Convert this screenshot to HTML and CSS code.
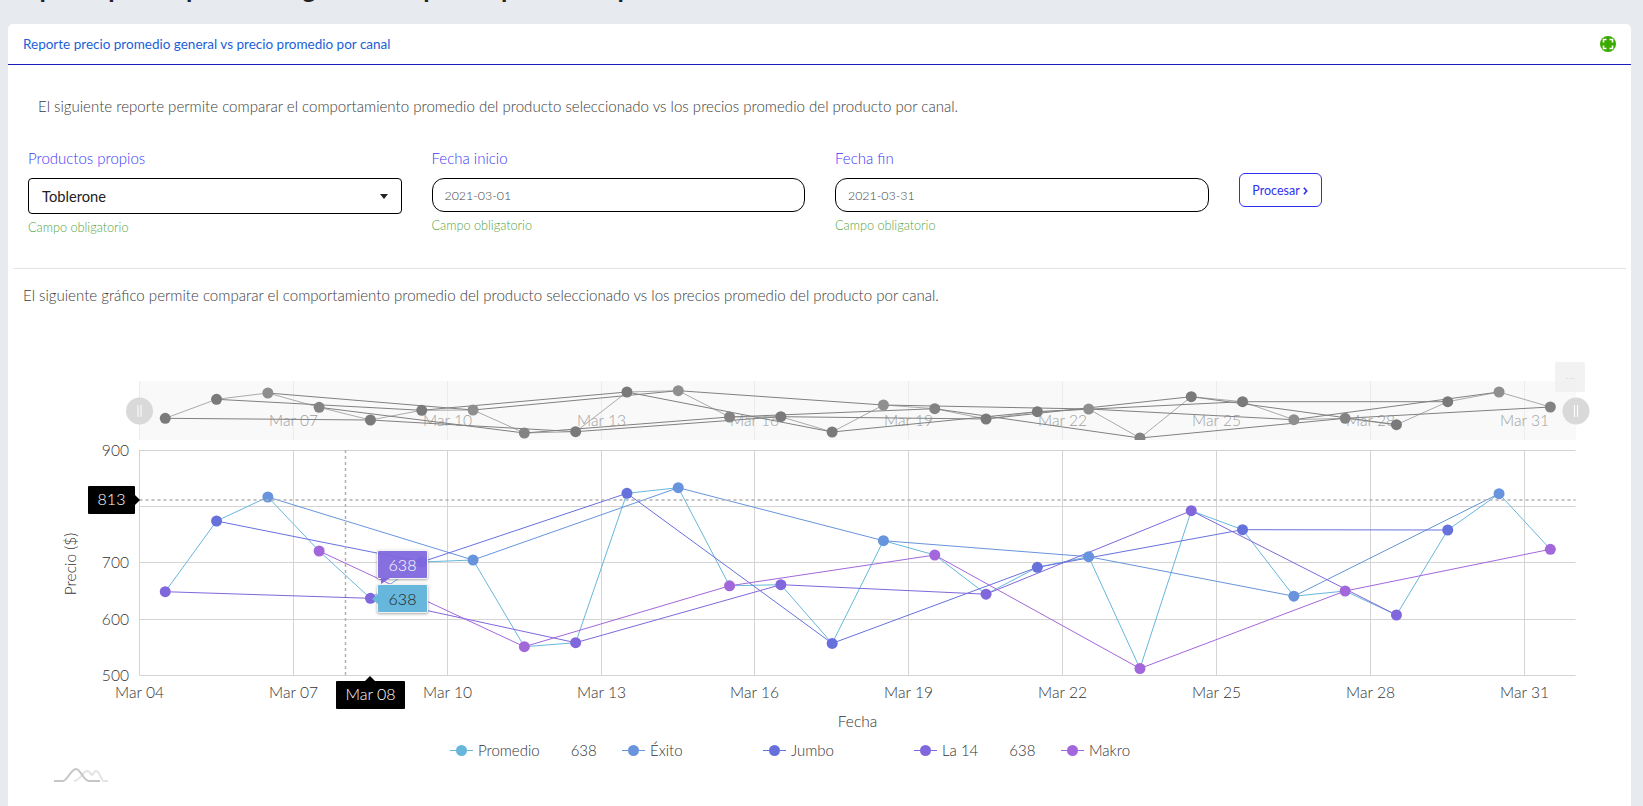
FILE: index.html
```html
<!DOCTYPE html>
<html>
    <head>
        <title>Reporte precio promedio</title>
        <link rel="stylesheet" href="styles.css">
    </head>
    <body>
        <h1 class="page-title">Reporte precio promedio general vs precio promedio por canal</h1>
        <main class="card">
            <header class="card-head">
                <span class="card-title">Reporte precio promedio general vs precio promedio por canal</span>
                <svg class="expand" viewBox="0 0 16 16" width="16" height="16">
                    <circle cx="8" cy="8" r="8" fill="#3aaa00"/>
                    <path d="M3.5 6.5V3.5H6.5M9.5 3.5H12.5V6.5M12.5 9.5V12.5H9.5M6.5 12.5H3.5V9.5" fill="none" stroke="#fff" stroke-width="1.6"/>
                </svg>
            </header>

            <p class="intro">El siguiente reporte permite comparar el comportamiento promedio del producto seleccionado vs los precios promedio del producto por canal.</p>

            <form class="filters">
                <div class="field">
                    <label>Productos propios</label>
                    <div class="select">Toblerone<i class="caret"></i></div>
                    <small class="hint">Campo obligatorio</small>
                </div>
                <div class="field">
                    <label>Fecha inicio</label>
                    <input class="date" type="text" value="2021-03-01">
                    <small class="hint hint-date">Campo obligatorio</small>
                </div>
                <div class="field">
                    <label>Fecha fin</label>
                    <input class="date" type="text" value="2021-03-31">
                    <small class="hint hint-date">Campo obligatorio</small>
                </div>
                <button class="process" type="button">Procesar
                    <svg viewBox="0 0 6 10" width="5" height="8"><path d="M1 1L4.5 5L1 9" fill="none" stroke="#2f2ff0" stroke-width="2"/></svg>
                </button>
            </form>

            <hr class="divider">
            <p class="chart-text">El siguiente gráfico permite comparar el comportamiento promedio del producto seleccionado vs los precios promedio del producto por canal.</p>

            <section class="chart">
                <!-- viewBox uses page coordinates -->
                <svg class="plot" viewBox="8 340 1623 400" width="1623" height="400">
                    <defs>
                        <clipPath id="nav-clip"><rect x="139.5" y="381" width="1436.5" height="59"/></clipPath>
                    </defs>

                    <!-- navigator -->
                    <rect x="139.5" y="381" width="1436.5" height="59" fill="#f9f9f9"/>
                    <g class="nav-grid">
                        <path d="M139.5 381V440M293.5 381V440M447.5 381V440M601.5 381V440M754.5 381V440M908.5 381V440M1062.5 381V440M1216.5 381V440M1370.5 381V440M1524.5 381V440"/>
                    </g>
                    <g class="nav-labels">
                        <text x="293.5" y="426">Mar 07</text>
                        <text x="447.5" y="426">Mar 10</text>
                        <text x="601.5" y="426">Mar 13</text>
                        <text x="754.5" y="426">Mar 16</text>
                        <text x="908.5" y="426">Mar 19</text>
                        <text x="1062.5" y="426">Mar 22</text>
                        <text x="1216.5" y="426">Mar 25</text>
                        <text x="1370.5" y="426">Mar 28</text>
                        <text x="1524.5" y="426">Mar 31</text>
                    </g>
                    <g clip-path="url(#nav-clip)">
                        <polyline class="nl n-prom" points="165.25,418.3 216.55,399.3 267.85,393 319.15,407.3 370.45,420 421.75,410.3 473.05,410 524.35,433 575.65,431.7 626.95,392 678.25,390.7 729.55,417 780.85,416.7 832.15,432 883.45,405 934.75,408.7 986.05,419 1037.35,411.7 1088.65,409 1139.95,438 1191.25,396.7 1242.55,401.7 1293.85,419.7 1345.15,418.3 1396.45,424.7 1447.75,401.7 1499.05,392 1550.35,407"/>
                        <polyline class="nl" points="267.85,393 473.05,410 678.25,390.7 883.45,405 1088.65,409 1293.85,419.7 1499.05,392"/>
                        <polyline class="nl" points="216.55,399.3 421.75,410.3 626.95,392 832.15,432 1037.35,411.7 1242.55,401.7 1447.75,401.7"/>
                        <polyline class="nl" points="165.25,418.3 370.45,420 575.65,431.7 780.85,416.7 986.05,419 1191.25,396.7 1396.45,424.7"/>
                        <polyline class="nl" points="319.15,407.3 524.35,433 729.55,417 934.75,408.7 1139.95,438 1345.15,418.3 1550.35,407"/>
                        <g class="dots" fill="#7a7a7a">
                            <circle cx="165.25" cy="418.3"/><circle cx="370.45" cy="420"/><circle cx="575.65" cy="431.7"/><circle cx="780.85" cy="416.7"/><circle cx="986.05" cy="419"/><circle cx="1191.25" cy="396.7"/><circle cx="1396.45" cy="424.7"/>
                            <circle cx="216.55" cy="399.3"/><circle cx="421.75" cy="410.3"/><circle cx="626.95" cy="392"/><circle cx="832.15" cy="432"/><circle cx="1037.35" cy="411.7"/><circle cx="1242.55" cy="401.7"/><circle cx="1447.75" cy="401.7"/>
                        </g>
                        <g class="dots" fill="#8f8f8f">
                            <circle cx="267.85" cy="393"/><circle cx="473.05" cy="410"/><circle cx="678.25" cy="390.7"/><circle cx="883.45" cy="405"/><circle cx="1088.65" cy="409"/><circle cx="1293.85" cy="419.7"/><circle cx="1499.05" cy="392"/>
                        </g>
                        <g class="dots" fill="#838383">
                            <circle cx="319.15" cy="407.3"/><circle cx="524.35" cy="433"/><circle cx="729.55" cy="417"/><circle cx="934.75" cy="408.7"/><circle cx="1139.95" cy="438"/><circle cx="1345.15" cy="418.3"/><circle cx="1550.35" cy="407"/>
                        </g>
                    </g>
                    <g class="handle">
                        <circle cx="139.5" cy="411" r="13.5"/>
                        <path d="M138 405V417M141 405V417"/>
                        <circle cx="1576" cy="411" r="13.5"/>
                        <path d="M1574.5 405V417M1577.5 405V417"/>
                    </g>
                    <rect x="1555" y="362" width="30" height="30" rx="2" fill="#efefef" fill-opacity=".8"/>
                    <text class="dots-menu" x="1570" y="379">...</text>

                    <!-- grid -->
                    <g class="grid">
                        <path d="M139.5 450.5H1575.5M139.5 506.5H1575.5M139.5 562.5H1575.5M139.5 619.5H1575.5M139.5 675.5H1575.5"/>
                        <path d="M139.5 450V675M293.5 450V675M447.5 450V675M601.5 450V675M754.5 450V675M908.5 450V675M1062.5 450V675M1216.5 450V675M1370.5 450V675M1524.5 450V675"/>
                    </g>
                    <g class="y-labels">
                        <text x="129" y="455.5">900</text>
                        <text x="129" y="567.5">700</text>
                        <text x="129" y="624.5">600</text>
                        <text x="129" y="680.5">500</text>
                    </g>
                    <g class="x-labels">
                        <text x="139.5" y="698">Mar 04</text>
                        <text x="293.5" y="698">Mar 07</text>
                        <text x="447.5" y="698">Mar 10</text>
                        <text x="601.5" y="698">Mar 13</text>
                        <text x="754.5" y="698">Mar 16</text>
                        <text x="908.5" y="698">Mar 19</text>
                        <text x="1062.5" y="698">Mar 22</text>
                        <text x="1216.5" y="698">Mar 25</text>
                        <text x="1370.5" y="698">Mar 28</text>
                        <text x="1524.5" y="698">Mar 31</text>
                    </g>
                    <text class="axis-title" transform="translate(76 564) rotate(-90)">Precio ($)</text>
                    <text class="axis-title" x="857.5" y="727">Fecha</text>

                    <!-- series -->
                    <polyline class="line promedio" points="165.25,591.7 216.55,521 267.85,497 319.15,551 370.45,598.3 421.75,562 473.05,560 524.35,646.7 575.65,642.7 626.95,493.3 678.25,487.7 729.55,585.8 780.85,584.7 832.15,643.4 883.45,540.7 934.75,555 986.05,594.2 1037.35,567.3 1088.65,556.7 1139.95,668.5 1191.25,510.7 1242.55,529.7 1293.85,596.2 1345.15,591 1396.45,615 1447.75,530 1499.05,493.7 1550.35,549.3"/>
                    <polyline class="line exito" points="267.85,497 473.05,560 678.25,487.7 883.45,540.7 1088.65,556.7 1293.85,596.2 1499.05,493.7"/>
                    <polyline class="line jumbo" points="216.55,521 421.75,562 626.95,493.3 832.15,643.4 1037.35,567.3 1242.55,529.7 1447.75,530"/>
                    <polyline class="line la14" points="165.25,591.7 370.45,598.3 575.65,642.7 780.85,584.7 986.05,594.2 1191.25,510.7 1396.45,615"/>
                    <polyline class="line makro" points="319.15,551 524.35,646.7 729.55,585.8 934.75,555 1139.95,668.5 1345.15,591 1550.35,549.3"/>
                    <g class="dots" fill="#8067dc">
                        <circle cx="165.25" cy="591.7"/><circle cx="370.45" cy="598.3"/><circle cx="575.65" cy="642.7"/><circle cx="780.85" cy="584.7"/><circle cx="986.05" cy="594.2"/><circle cx="1191.25" cy="510.7"/><circle cx="1396.45" cy="615"/>
                    </g>
                    <g class="dots" fill="#6771dc">
                        <circle cx="216.55" cy="521"/><circle cx="421.75" cy="562"/><circle cx="626.95" cy="493.3"/><circle cx="832.15" cy="643.4"/><circle cx="1037.35" cy="567.3"/><circle cx="1242.55" cy="529.7"/><circle cx="1447.75" cy="530"/>
                    </g>
                    <g class="dots" fill="#6794dc">
                        <circle cx="267.85" cy="497"/><circle cx="473.05" cy="560"/><circle cx="678.25" cy="487.7"/><circle cx="883.45" cy="540.7"/><circle cx="1088.65" cy="556.7"/><circle cx="1293.85" cy="596.2"/><circle cx="1499.05" cy="493.7"/>
                    </g>
                    <g class="dots" fill="#a367dc">
                        <circle cx="319.15" cy="551"/><circle cx="524.35" cy="646.7"/><circle cx="729.55" cy="585.8"/><circle cx="934.75" cy="555"/><circle cx="1139.95" cy="668.5"/><circle cx="1345.15" cy="591"/><circle cx="1550.35" cy="549.3"/>
                    </g>

                    <!-- cursor -->
                    <path class="cursor" d="M139.5 500H1575.5M345.5 450V675"/>
                </svg>

                <div class="tip tip-axis tip-y">813</div>
                <div class="tip tip-axis tip-x">Mar 08</div>
                <div class="tip tip-value tip-purple">638</div>
                <div class="tip tip-value tip-blue">638</div>

                <ul class="legend">
                    <li class="item item-promedio"><i class="marker m-promedio"></i>Promedio<b>638</b></li>
                    <li class="item item-exito"><i class="marker m-exito"></i>Éxito</li>
                    <li class="item item-jumbo"><i class="marker m-jumbo"></i>Jumbo</li>
                    <li class="item item-la14"><i class="marker m-la14"></i>La 14<b>638</b></li>
                    <li class="item"><i class="marker m-makro"></i>Makro</li>
                </ul>

                <svg class="logo" viewBox="0 0 54 14" width="54" height="14">
                    <path d="M20 13C26 13 29 3 33 3C36 3 37 7 38 7C39 7 40 3 42 3C46 3 47 13 50 13H54" fill="none" stroke="#e3e3e3" stroke-width="2"/>
                    <path d="M0 13H9C13 13 17 1 22 1C27 1 29 13 35 13H46" fill="none" stroke="#c6c6c6" stroke-width="2"/>
                </svg>
            </section>
        </main>
    </body>
</html>
```

FILE: styles.css
```css
*{
    box-sizing:border-box;
}
body{
    margin:0;
    height:806px;
    overflow:hidden;
    font-family:'Lato', sans-serif;
    background-color:#e7eaef;
    color:#3c3c3c;
}
.page-title{
    height:24px;
    margin:-28px 0 28px 0;
    padding-left:10px;
    font-size:25.8px;
    line-height:32px;
    font-weight:700;
    white-space:nowrap;
    color:#222;
}
.card{
    margin-left:8px;
    width:1623px;
    height:782px;
    border-radius:5px 5px 0 0;
    background-color:#fff;
}
.card-head{
    display:flex;
    justify-content:space-between;
    align-items:center;
    height:41px;
    padding:0 15px;
    border-bottom:1px solid #1c1cb8;
}
.card-title{
    font-size:13.5px;
    color:#1a5fd8;
}
.intro{
    margin:0;
    padding:32px 0 0 30px;
    font-size:15.07px;
    font-weight:300;
    line-height:18px;
}
.filters{
    display:flex;
    gap:30px;
    height:153px;
    padding:35px 0 0 20px;
}
.field{
    display:flex;
    flex-direction:column;
    width:373.5px;
}
label{
    height:28px;
    font-size:15px;
    font-weight:300;
    line-height:16px;
    color:#4238f5;
}
.select{
    display:flex;
    justify-content:space-between;
    align-items:center;
    height:36px;
    padding:0 13px;
    border:1px solid #000;
    border-radius:4px;
    font-size:14.7px;
    color:#222;
}
.caret{
    width:0;
    height:0;
    border-left:4px solid transparent;
    border-right:4px solid transparent;
    border-top:5px solid #222;
}
.date{
    height:34px;
    padding:0 12px;
    border:1px solid #000;
    border-radius:12px;
    font-family:'Lato', sans-serif;
    font-size:12.4px;
    font-weight:300;
    color:#444;
    outline:none;
}
.hint{
    margin-top:6px;
    font-size:12.7px;
    font-weight:300;
    line-height:14px;
    color:#55a43f;
}
.process{
    width:83px;
    height:34px;
    margin-top:23px;
    padding:0;
    border:1px solid #2f2ff0;
    border-radius:6px;
    background-color:#fff;
    font-family:'Lato', sans-serif;
    font-size:12.5px;
    color:#2f2ff0;
}
.divider{
    margin:0 5px;
    border:0;
    border-top:1px solid #e2e2e2;
}
.chart-text{
    margin:0;
    padding:17px 0 0 15px;
    font-size:15.07px;
    font-weight:300;
    line-height:18px;
}
.chart{
    position:relative;
    margin-top:36px;
}
.plot{
    display:block;
}
text{
    font-family:'Lato', sans-serif;
    font-weight:300;
}
.nav-grid path{
    fill:none;
    stroke:#ececec;
}
.nav-labels text{
    font-size:15.6px;
    text-anchor:middle;
    fill:#a0a0a0;
}
.nl{
    fill:none;
    stroke:#808080;
}
.n-prom{
    stroke:#aaa;
}
.dots circle{
    r:5.5px;
}
.handle circle{
    fill:#d9d9d9;
}
.handle path{
    fill:none;
    stroke:#fff;
}
.dots-menu{
    font-size:12px;
    text-anchor:middle;
    fill:#b5d2f5;
}
.grid path{
    fill:none;
    stroke:#d4d4d4;
}
.y-labels text{
    font-size:15.6px;
    text-anchor:end;
    fill:#333;
}
.x-labels text{
    font-size:15.6px;
    text-anchor:middle;
    fill:#333;
}
.axis-title{
    font-size:15.5px;
    text-anchor:middle;
    fill:#333;
}
.line{
    fill:none;
    stroke-width:1;
}
.promedio{
    stroke:#67b7dc;
}
.exito{
    stroke:#6794dc;
}
.jumbo{
    stroke:#6771dc;
}
.la14{
    stroke:#8067dc;
}
.makro{
    stroke:#a367dc;
}
.cursor{
    fill:none;
    stroke:#b0b0b0;
    stroke-width:1.5;
    stroke-dasharray:3 3;
}
.tip{
    position:absolute;
    display:flex;
    justify-content:center;
    align-items:center;
    font-size:16px;
    font-weight:300;
}
.tip::after{
    content:"";
    position:absolute;
    width:0;
    height:0;
}
/* chart block starts at y=340 in the page */
.tip-axis{
    padding-bottom:3px;
    border-radius:1px;
    background-color:#000;
    color:#fff;
}
.tip-y{
    left:80px;
    top:146px;
    width:47px;
    height:28px;
}
.tip-y::after{
    left:100%;
    top:9px;
    border-top:5px solid transparent;
    border-bottom:5px solid transparent;
    border-left:5px solid #000;
}
.tip-x{
    left:328px;
    top:341px;
    width:69px;
    height:28px;
}
.tip-x::after{
    left:29px;
    top:-5px;
    border-left:5px solid transparent;
    border-right:5px solid transparent;
    border-bottom:5px solid #000;
}
.tip-value{
    width:51px;
    height:29px;
    left:369px;
    padding-bottom:1px;
    border:1px solid #f2f2f2;
    border-radius:2px;
    box-shadow:0 1px 3px rgba(0,0,0,.35);
}
.tip-purple{
    top:210px;
    background-color:rgba(128,103,220,.95);
    color:#fff;
}
.tip-purple::after{
    left:3px;
    top:100%;
    border-top:6px solid #8067dc;
    border-right:9px solid transparent;
}
.tip-blue{
    top:244px;
    background-color:#67b7dc;
    color:#222;
}
.tip-blue::after{
    right:100%;
    top:9px;
    border-top:5px solid transparent;
    border-bottom:5px solid transparent;
    border-right:6px solid #67b7dc;
}
.legend{
    display:flex;
    margin:-1px 0 0 0;
    padding:0 0 0 442px;
    list-style:none;
    font-size:15px;
    font-weight:300;
    line-height:22px;
    color:#333;
}
.item{
    display:flex;
    align-items:center;
}
.item b{
    margin-left:31px;
    font-weight:300;
}
.item-promedio{
    width:172px;
}
.item-exito{
    width:141px;
}
.item-jumbo{
    width:151px;
}
.item-la14{
    width:147px;
}
.marker{
    position:relative;
    width:23px;
    height:1px;
    margin-right:5px;
}
.marker::after{
    content:"";
    position:absolute;
    left:6px;
    top:-5px;
    width:11px;
    height:11px;
    border-radius:50%;
    background-color:inherit;
}
.m-promedio{
    background-color:#67b7dc;
}
.m-exito{
    background-color:#6794dc;
}
.m-jumbo{
    background-color:#6771dc;
}
.m-la14{
    background-color:#8067dc;
}
.m-makro{
    background-color:#a367dc;
}
.logo{
    display:block;
    margin:7px 0 0 46px;
}
```
